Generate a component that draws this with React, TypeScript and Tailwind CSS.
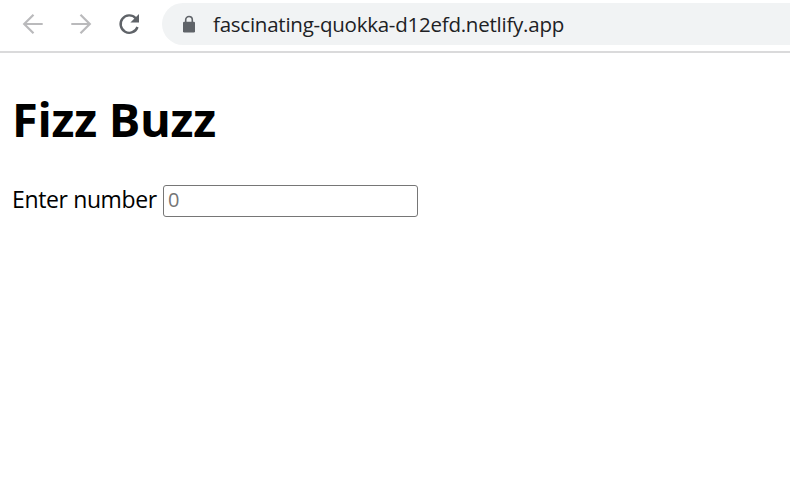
import React from "react";

function Arrow({ className = "" }: { className?: string }) {
  return (
    <svg viewBox="0 0 30 30" className={`h-[30px] w-[30px] shrink-0 ${className}`} fill="none" stroke="#bababc" strokeWidth="2.2">
      <path d="M24.7 15H7M15.5 5.7L6.2 15l9.3 9.3" />
    </svg>
  );
}

export default function App() {
  return (
    <div className="flex h-[482px] w-[790px] flex-col overflow-hidden bg-white font-['Open_Sans','Noto_Sans',sans-serif] text-black">
      <header className="flex h-[53px] shrink-0 items-start border-b-2 border-[#dadadb] pl-[18px] pt-[3px]">
        <nav className="flex h-[42px] items-center gap-[18px]">
          <Arrow />
          <Arrow className="rotate-180" />
          <svg viewBox="0 0 30 30" className="h-[30px] w-[30px] shrink-0" fill="none">
            <path d="M21.7 9.2A8.7 8.7 0 1 0 23.5 18" stroke="#5f6368" strokeWidth="2.4" />
            <path d="M25 5v8.6h-8.6z" fill="#5f6368" />
          </svg>
        </nav>
        <div className="ml-[18px] flex h-[42px] flex-1 items-center rounded-l-full bg-[#f1f3f4] pl-[17px]">
          <svg viewBox="0 0 20 20" className="h-5 w-5 shrink-0" fill="none">
            <path d="M6.7 9V5.8a3.3 3.3 0 0 1 6.6 0V9" stroke="#5f6368" strokeWidth="1.6" />
            <rect x="4" y="7.7" width="12" height="10.8" rx="1.3" fill="#5f6368" />
          </svg>
          <span className="ml-[14px] mt-px whitespace-nowrap text-[20.5px] tracking-[-0.24px] text-[#202124]">fascinating-quokka-d12efd.netlify.app</span>
        </div>
      </header>
      <main className="px-3 pt-[34px]">
        <h1 className="text-[47px] font-bold leading-[64px] tracking-[-0.3px]">Fizz Buzz</h1>
        <label className="mt-[34px] flex h-[32px] items-center text-[23px]">
          <span className="-mt-[3px] w-[151px] whitespace-nowrap tracking-[-0.37px]">Enter number</span>
          <input placeholder="0" className="h-8 w-[255px] rounded-[3px] border border-[#767676] px-1 pb-[3px] text-[20px] placeholder:text-[#757575]" />
        </label>
      </main>
    </div>
  );
}
